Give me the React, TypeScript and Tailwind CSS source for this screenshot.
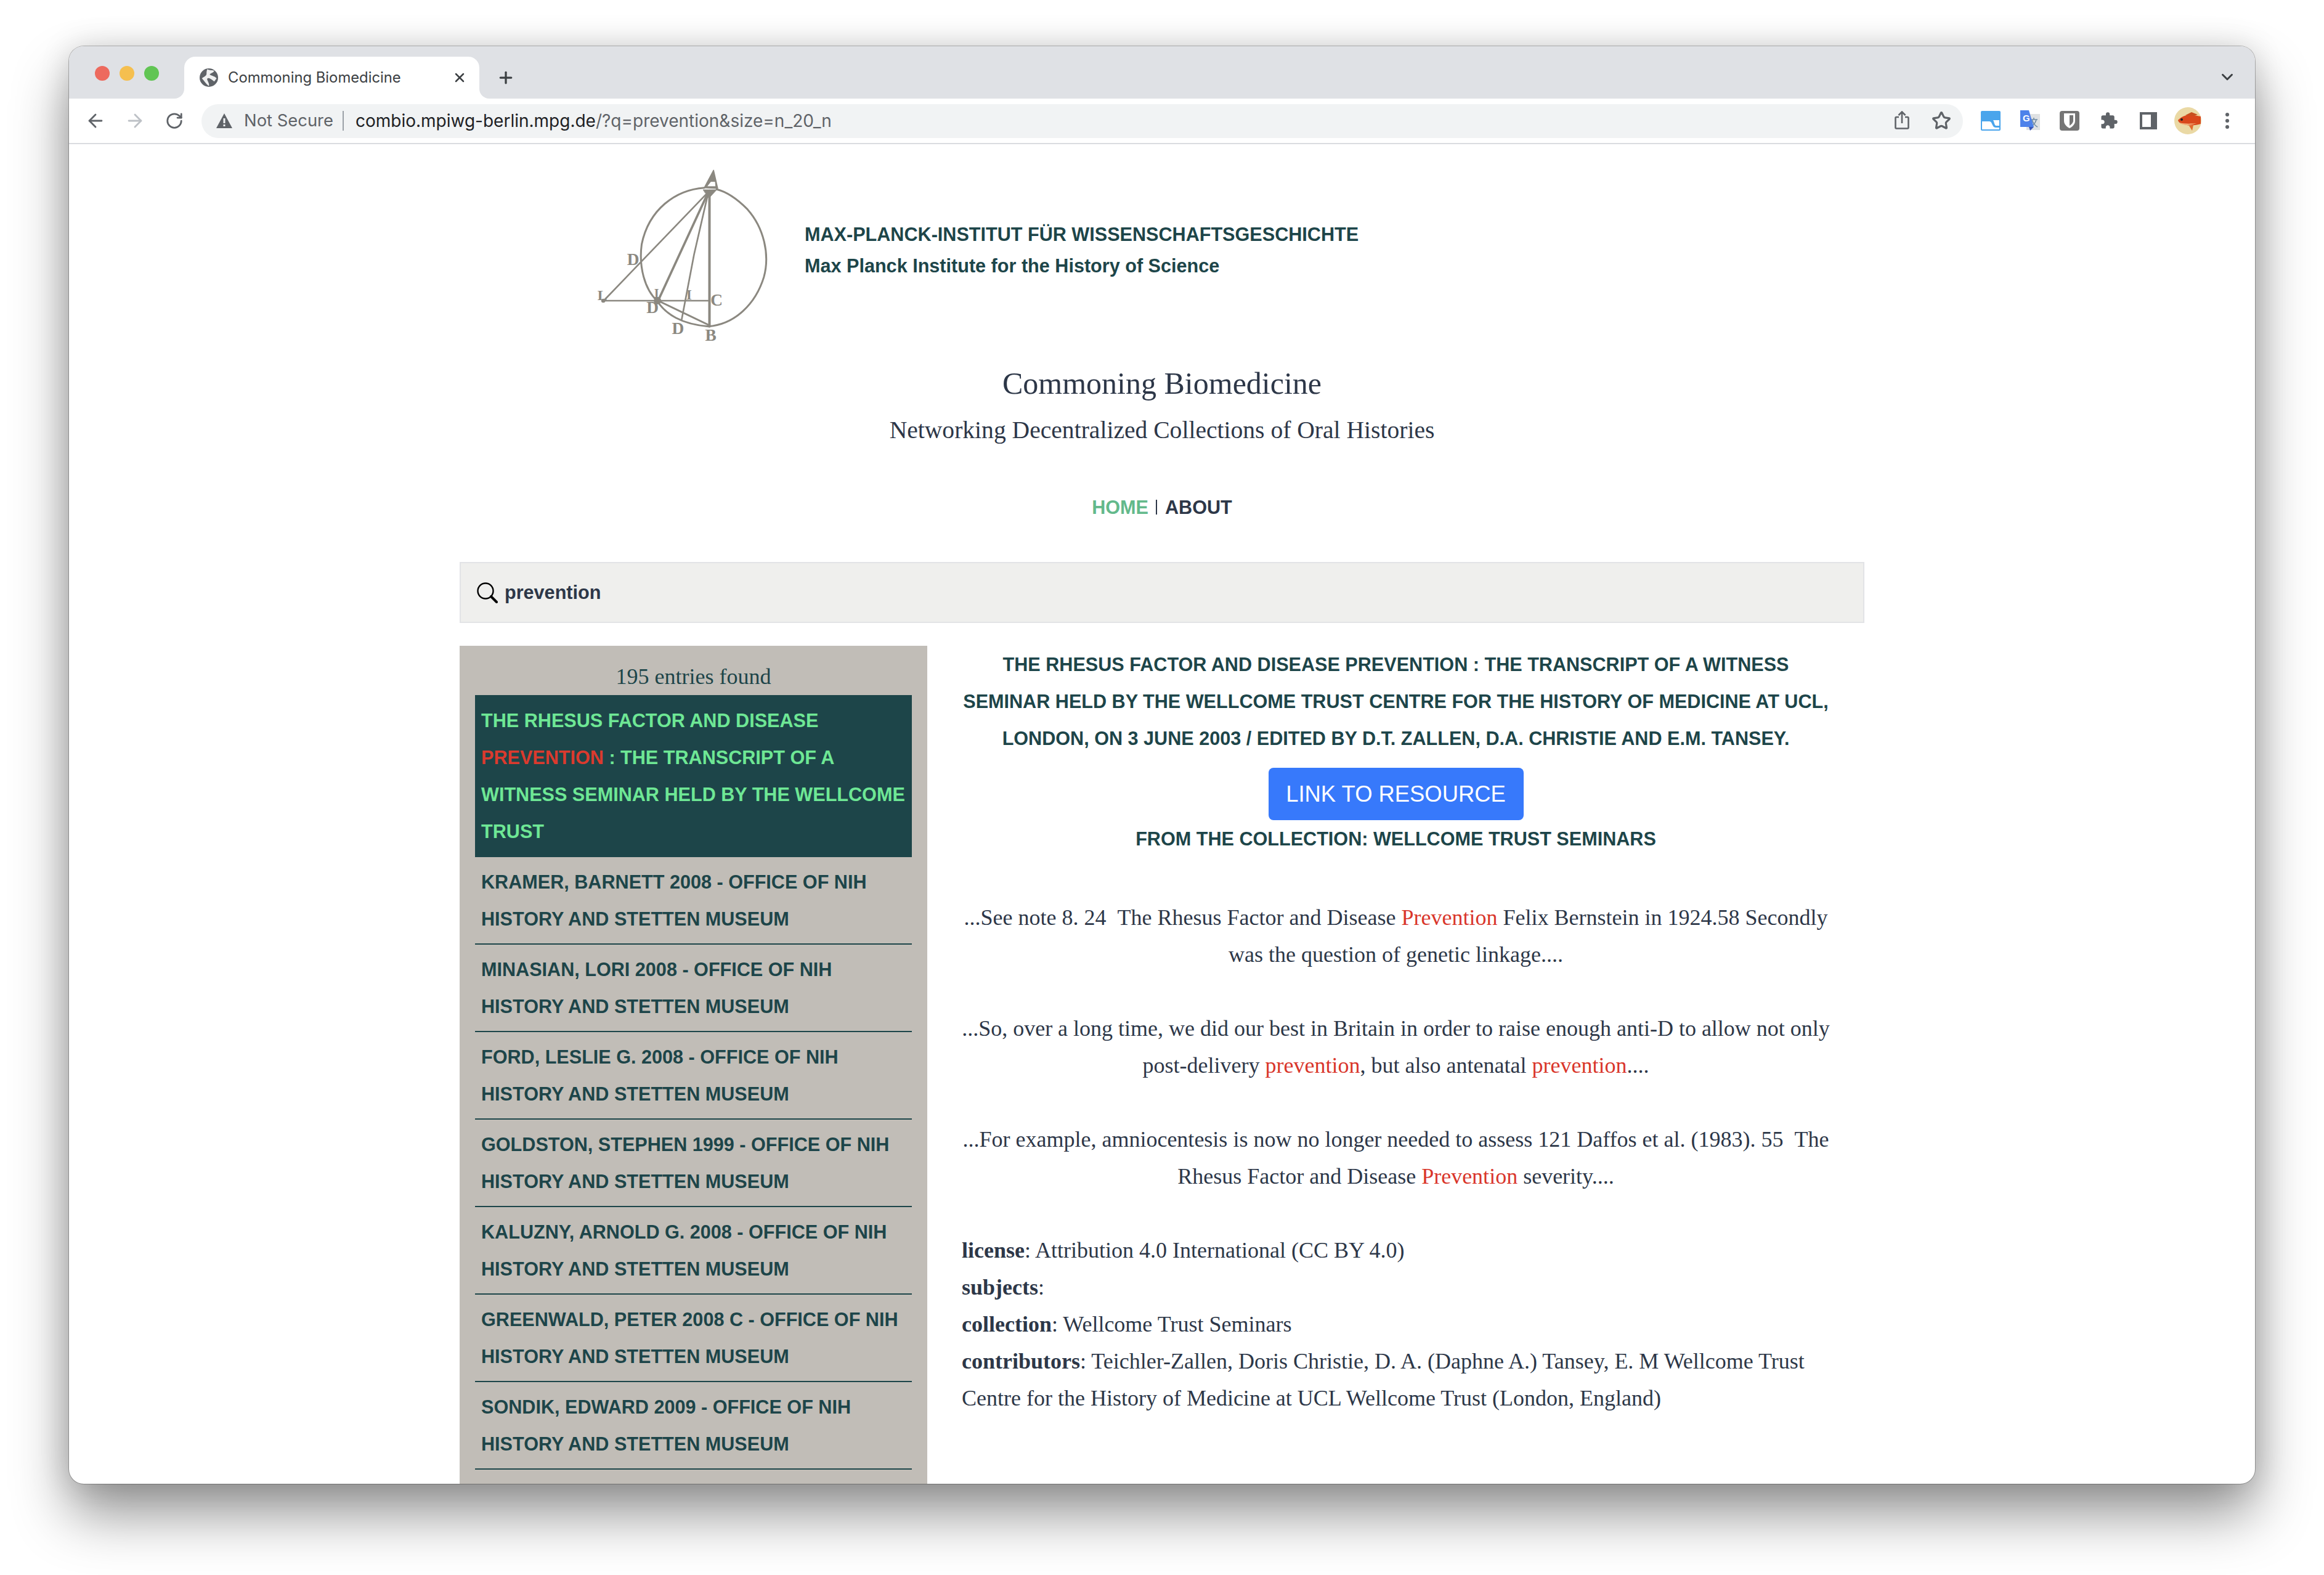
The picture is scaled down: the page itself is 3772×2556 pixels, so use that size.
import { ArrowLeft, ArrowRight, RotateCw, Star, ChevronDown, Plus, X } from "lucide-react"

const entries = [
  ["KRAMER, BARNETT 2008 - OFFICE OF NIH", "HISTORY AND STETTEN MUSEUM"],
  ["MINASIAN, LORI 2008 - OFFICE OF NIH", "HISTORY AND STETTEN MUSEUM"],
  ["FORD, LESLIE G. 2008 - OFFICE OF NIH", "HISTORY AND STETTEN MUSEUM"],
  ["GOLDSTON, STEPHEN 1999 - OFFICE OF NIH", "HISTORY AND STETTEN MUSEUM"],
  ["KALUZNY, ARNOLD G. 2008 - OFFICE OF NIH", "HISTORY AND STETTEN MUSEUM"],
  ["GREENWALD, PETER 2008 C - OFFICE OF NIH", "HISTORY AND STETTEN MUSEUM"],
  ["SONDIK, EDWARD 2009 - OFFICE OF NIH", "HISTORY AND STETTEN MUSEUM"],
]

function Logo() {
  return (
    <svg width="287" height="290" viewBox="100 100 860 870" fill="none" stroke="#8b8880" strokeLinecap="round" strokeLinejoin="round" className="shrink-0">
      <path d="M640 195 C500 205 370 300 335 470 C320 580 350 690 410 745 C450 810 530 860 660 870 C790 860 890 760 930 630 C960 520 930 390 850 300 C800 250 750 215 700 203" strokeWidth="9" />
      <path d="M660 215 L150 745 L660 745" strokeWidth="8" />
      <path d="M660 215 L415 745" strokeWidth="11" />
      <path d="M660 215 L590 520 L530 835" strokeWidth="8" />
      <path d="M665 210 L665 870" strokeWidth="12" />
      <path d="M415 745 L665 865" strokeWidth="9" />
      <path d="M640 195 L685 110 L705 198 L640 195 Z" fill="#8b8880" strokeWidth="5" />
      <path d="M655 188 L672 166 L692 166 L694 188 Z" fill="#fff" stroke="none" />
      <path d="M635 205 L700 205 L663 245 Z" fill="#8b8880" strokeWidth="3" />
      <circle cx="412" cy="745" r="18" fill="#8b8880" stroke="none" />
      <circle cx="148" cy="745" r="10" fill="#8b8880" stroke="none" />
      <g fill="#8b8880" stroke="none" fontFamily="'Liberation Serif', serif" fontWeight="700" fontSize="82">
        <text x="264" y="570">D</text>
        <text x="120" y="742" fontSize="72">L</text>
        <text x="358" y="804">D</text>
        <text x="396" y="730" fontSize="60">I</text>
        <text x="552" y="740" fontSize="70">I</text>
        <text x="670" y="768">C</text>
        <text x="482" y="908">D</text>
        <text x="644" y="940">B</text>
      </g>
    </svg>
  )
}

function Chrome() {
  return (
    <div className="shrink-0 font-['Inter',sans-serif]">
      <div className="h-[85px] bg-[#dfe1e5] flex relative">
        <div className="flex gap-[16px] pl-[42px] pr-[32px] pt-[32px]">
          <span className="w-[24px] h-[24px] rounded-full bg-[#ed6a5e]" />
          <span className="w-[24px] h-[24px] rounded-full bg-[#f5bf4f]" />
          <span className="w-[24px] h-[24px] rounded-full bg-[#61c554]" />
        </div>
        <div className="relative mt-[17px] w-[479px] h-[68px] bg-white rounded-t-[18px] flex items-center pl-[25px] pr-[20px] ml-[9px]">
          <span className="absolute -left-[16px] bottom-0 w-[16px] h-[16px] bg-white"><span className="block w-full h-full bg-[#dfe1e5] rounded-br-[16px]" /></span>
          <span className="absolute -right-[16px] bottom-0 w-[16px] h-[16px] bg-white"><span className="block w-full h-full bg-[#dfe1e5] rounded-bl-[16px]" /></span>
          <svg width="30" height="30" viewBox="0 0 24 24" className="shrink-0">
            <circle cx="12" cy="12" r="12" fill="#5f6368" />
            <path d="M10 1 C13 3 17 2 19 3 C18 6 14 6 13 8 C16 10 20 10 22 13 L19 17 C17 16 16 14 13 13 C11 12 9 13 10 15 C11 18 13 20 12 23 C8 20 6 16 3 13 C5 11 9 10 9 7 C9 5 9 3 10 1 Z" fill="#fff" opacity="0.9" />
          </svg>
          <span className="ml-[16px] text-[23.8px] leading-none text-[#3c4043] whitespace-nowrap">Commoning Biomedicine</span>
          <X className="ml-auto text-[#3c4043]" size={24} strokeWidth={2.5} />
        </div>
        <div className="mt-[17px] h-[68px] ml-[28px] flex items-center">
          <Plus className="text-[#3c4043]" size={30} strokeWidth={2.6} />
        </div>
        <ChevronDown className="absolute right-[30px] top-[35px] text-[#3c4043]" size={30} strokeWidth={2.4} />
      </div>
      <div className="h-[74px] bg-white border-b-2 border-[#dadce0] flex items-center pl-[11px]">
        <div className="w-[64px] flex justify-center"><ArrowLeft className="text-[#5f6368]" size={34} strokeWidth={2} /></div>
        <div className="w-[64px] flex justify-center"><ArrowRight className="text-[#bdc1c6]" size={34} strokeWidth={2} /></div>
        <div className="w-[64px] flex justify-center"><RotateCw className="text-[#5f6368]" size={30} strokeWidth={2.2} /></div>
        <div className="ml-[12px] w-[2859px] h-[55px] rounded-full bg-[#f1f3f4] flex items-center pl-[24px] pr-[3px]">
          <svg width="26" height="24" viewBox="0 0 26 24" className="shrink-0">
            <path d="M13 0 L26 24 L0 24 Z" fill="#5f6368" />
            <rect x="11.5" y="8" width="3" height="8" fill="#f1f3f4" />
            <rect x="11.5" y="18" width="3" height="3" fill="#f1f3f4" />
          </svg>
          <span className="ml-[19px] text-[27.4px] leading-none text-[#5f6368] whitespace-nowrap">Not Secure</span>
          <span className="ml-[15px] w-[2px] h-[32px] bg-[#9aa0a6]" />
          <span className="ml-[19px] text-[28px] leading-none whitespace-nowrap text-[#202124]">combio.mpiwg-berlin.mpg.de<span className="text-[#5f6368]">/?q=prevention&amp;size=n_20_n</span></span>
          <div className="ml-auto flex">
            <div className="w-[64px] flex justify-center">
              <svg width="24" height="30" viewBox="0 0 24 30" fill="none" stroke="#5f6368" strokeWidth="2.6">
                <path d="M7 10 H3 A1.5 1.5 0 0 0 1.5 11.5 V27 A1.5 1.5 0 0 0 3 28.5 H21 A1.5 1.5 0 0 0 22.5 27 V11.5 A1.5 1.5 0 0 0 21 10 H17" />
                <path d="M12 20 V2 M6.5 7 L12 1.5 L17.5 7" />
              </svg>
            </div>
            <div className="w-[64px] flex justify-center"><Star className="text-[#5f6368]" size={32} strokeWidth={2.4} /></div>
          </div>
        </div>
        <div className="ml-[13px] flex items-center">
          <div className="w-[64px] flex justify-center">
            <svg width="32" height="32" viewBox="0 0 32 32">
              <rect width="32" height="32" rx="2" fill="#4aa5ec" />
              <path d="M2 17 H14 C19 17 18 27 24 27 H30 V30 H2 Z" fill="#fff" />
              <path d="M20 15 H30 V24 H25 C22 24 22 18 20 15 Z" fill="#fff" />
            </svg>
          </div>
          <div className="w-[64px] flex justify-center">
            <svg width="32" height="34" viewBox="0 0 32 34">
              <rect x="10" y="6" width="22" height="26" fill="#dfe1e3" />
              <path d="M22 12 V15 M17 15 H28 M19 15 C20 20 24 25 28 27 M26 15 C25 20 21 25 17 27" stroke="#6f8aa3" strokeWidth="1.6" fill="none" />
              <path d="M0 0 H14 L22 27 H0 Z" fill="#4e82ea" />
              <path d="M22 27 L16 33 L14 27 Z" fill="#3a56b8" />
              <text x="4" y="18" fill="#fff" fontSize="15" fontWeight="700" fontFamily="'Liberation Sans', sans-serif">G</text>
            </svg>
          </div>
          <div className="w-[64px] flex justify-center">
            <svg width="32" height="32" viewBox="0 0 32 32">
              <rect width="32" height="32" rx="4" fill="#757575" />
              <path d="M7 4 H25 V16 C25 22 20 26 16 28 C12 26 7 22 7 16 Z" fill="#fff" />
              <path d="M16 7 H22 V16 C22 19 19 22 16 24 Z" fill="#757575" />
            </svg>
          </div>
          <div className="w-[64px] flex justify-center">
            <svg width="30" height="30" viewBox="0 0 24 24" fill="#5f6368">
              <path d="M20.5 11H19V7c0-1.1-.9-2-2-2h-4V3.5a2.5 2.5 0 0 0-5 0V5H4c-1.1 0-1.99.9-1.99 2v3.8H3.5c1.49 0 2.7 1.21 2.7 2.7s-1.21 2.7-2.7 2.7H2V20c0 1.1.9 2 2 2h3.8v-1.5c0-1.49 1.21-2.7 2.7-2.7s2.7 1.21 2.7 2.7V22H17c1.1 0 2-.9 2-2v-4h1.5a2.5 2.5 0 0 0 0-5z" />
            </svg>
          </div>
          <div className="w-[64px] flex justify-center">
            <svg width="28" height="28" viewBox="0 0 28 28">
              <rect width="28" height="28" fill="#5f6368" />
              <rect x="4" y="4" width="14" height="20" fill="#fff" />
            </svg>
          </div>
          <div className="w-[64px] flex justify-center">
            <svg width="44" height="44" viewBox="0 0 44 44">
              <ellipse cx="22" cy="22" rx="22" ry="22" fill="#ead9a5" />
              <path d="M6 21 C12 14 22 11 32 13 L43 15 V27 C36 29 26 31 16 28 C11 27 7 25 6 21 Z" fill="#d9481c" />
              <path d="M18 13 L28 8 L38 12 L32 14 Z" fill="#c7501f" />
              <path d="M24 30 L31 29 L29 38 Z" fill="#e2692c" />
              <path d="M8 25 C14 30 26 30 36 26 C26 27 16 27 8 25 Z" fill="#f2b27d" />
              <circle cx="12" cy="20" r="2" fill="#222" />
            </svg>
          </div>
          <div className="w-[64px] flex flex-col items-center gap-[4px]">
            <span className="w-[6px] h-[6px] rounded-full bg-[#5f6368]" />
            <span className="w-[6px] h-[6px] rounded-full bg-[#5f6368]" />
            <span className="w-[6px] h-[6px] rounded-full bg-[#5f6368]" />
          </div>
        </div>
      </div>
    </div>
  )
}

function Sidebar() {
  return (
    <div className="w-[759px] shrink-0 bg-[#c1bdb7] px-[25px] pt-[20px] text-[#1d4549]">
      <div className="h-[60px] leading-[60px] text-center text-[36px] font-['Liberation_Serif',serif]">195 entries found</div>
      <div className="bg-[#1d4549] px-[10px] pt-[11px] pb-[12px] text-[#6ee795] font-bold text-[30.6px] leading-[60px] whitespace-nowrap">
        THE RHESUS FACTOR AND DISEASE<br />
        <span className="text-[#db3a2e]">PREVENTION</span> : THE TRANSCRIPT OF A<br />
        WITNESS SEMINAR HELD BY THE WELLCOME<br />
        TRUST
      </div>
      {entries.map((e) => (
        <div key={e[0]} className="px-[10px] py-[10px] border-b-2 border-[#1d4549] font-bold text-[30.6px] leading-[60px] whitespace-nowrap">
          {e[0]}<br />{e[1]}
        </div>
      ))}
    </div>
  )
}

function Hit({ children }: { children: React.ReactNode }) {
  return <span className="text-[#d9362b]">{children}</span>
}

function Detail() {
  return (
    <div className="flex-1 px-[56px] text-[#2d3748] text-[36px] leading-[60px] font-['Liberation_Serif',serif]">
      <div className="text-center text-[#1d4549] font-['Liberation_Sans',sans-serif] font-bold text-[30.6px] whitespace-nowrap">
        THE RHESUS FACTOR AND DISEASE PREVENTION : THE TRANSCRIPT OF A WITNESS<br />
        SEMINAR HELD BY THE WELLCOME TRUST CENTRE FOR THE HISTORY OF MEDICINE AT UCL,<br />
        LONDON, ON 3 JUNE 2003 / EDITED BY D.T. ZALLEN, D.A. CHRISTIE AND E.M. TANSEY.
      </div>
      <div className="flex justify-center mt-[18px]">
        <div className="w-[414px] h-[85px] rounded-[8px] bg-[#3779fb] text-white font-['Liberation_Sans',sans-serif] text-[36.4px] flex items-center justify-center whitespace-nowrap">LINK TO RESOURCE</div>
      </div>
      <div className="text-center text-[#1d4549] font-['Liberation_Sans',sans-serif] font-bold text-[30.6px]">FROM THE COLLECTION: WELLCOME TRUST SEMINARS</div>
      <div className="mt-[68px] text-center whitespace-nowrap">
        ...See note 8. 24 &nbsp;The Rhesus Factor and Disease <Hit>Prevention</Hit> Felix Bernstein in 1924.58 Secondly<br />
        was the question of genetic linkage....
      </div>
      <div className="mt-[60px] text-center whitespace-nowrap">
        ...So, over a long time, we did our best in Britain in order to raise enough anti-D to allow not only<br />
        post-delivery <Hit>prevention</Hit>, but also antenatal <Hit>prevention</Hit>....
      </div>
      <div className="mt-[60px] text-center whitespace-nowrap">
        ...For example, amniocentesis is now no longer needed to assess 121 Daffos et al. (1983). 55 &nbsp;The<br />
        Rhesus Factor and Disease <Hit>Prevention</Hit> severity....
      </div>
      <div className="mt-[60px]">
        <div><b>license</b>: Attribution 4.0 International (CC BY 4.0)</div>
        <div><b>subjects</b>:</div>
        <div><b>collection</b>: Wellcome Trust Seminars</div>
        <div><b>contributors</b>: Teichler-Zallen, Doris Christie, D. A. (Daphne A.) Tansey, E. M Wellcome Trust<br />Centre for the History of Medicine at UCL Wellcome Trust (London, England)</div>
      </div>
    </div>
  )
}

export default function App() {
  return (
    <div className="w-[3772px] h-[2556px] bg-white overflow-hidden pl-[112px] pt-[75px]">
      <div className="w-[3548px] h-[2333px] rounded-[24px] overflow-hidden flex flex-col bg-white shadow-[0_50px_90px_rgba(0,0,0,0.42),0_0_50px_rgba(0,0,0,0.14),0_0_0_1px_rgba(0,0,0,0.25)]">
        <Chrome />
        <div className="flex-1 min-h-0 flex flex-col overflow-hidden font-['Liberation_Sans',sans-serif]">
          <div className="flex pt-[39px] pl-[851px]">
            <Logo />
            <div className="ml-[56px] pt-[82px] text-[#1d4549] font-bold text-[30.6px] leading-[51px]">
              <div>MAX-PLANCK-INSTITUT FÜR WISSENSCHAFTSGESCHICHTE</div>
              <div>Max Planck Institute for the History of Science</div>
            </div>
          </div>
          <div className="mt-[23px] text-center text-[#2d3748] text-[50px] leading-[72px] font-['Liberation_Serif',serif]">Commoning Biomedicine</div>
          <div className="mt-[10px] text-center text-[#2d3748] text-[39.6px] leading-[60px] font-['Liberation_Serif',serif]">Networking Decentralized Collections of Oral Histories</div>
          <div className="mt-[65px] flex justify-center items-center text-[30.6px] leading-[60px] font-bold">
            <span className="text-[#63b98b]">HOME</span>
            <span className="ml-[12px] mr-[13px] w-[2px] h-[24px] bg-[#2d3748]" />
            <span className="text-[#2d3748]">ABOUT</span>
          </div>
          <div className="mt-[59px] mx-[634px] flex flex-col flex-1 min-h-0">
            <div className="h-[99px] shrink-0 bg-[#efefed] border-2 border-[#e2e3e6] flex items-center pl-[26px]">
              <svg width="34" height="34" viewBox="0 0 34 34" fill="none" stroke="#000" className="shrink-0">
                <circle cx="14" cy="14" r="12.5" strokeWidth="2.4" />
                <path d="M23 23 L32 32" strokeWidth="4" strokeLinecap="round" />
              </svg>
              <span className="ml-[11px] text-[30.6px] font-bold text-[#2d3748]">prevention</span>
            </div>
            <div className="mt-[37px] flex flex-1 min-h-0">
              <Sidebar />
              <Detail />
            </div>
          </div>
        </div>
      </div>
    </div>
  )
}
